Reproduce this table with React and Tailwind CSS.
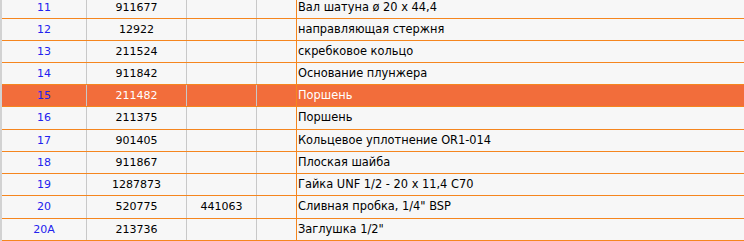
import React from "react";

const rows = [
  { n: "11", code: "911677", alt: "", name: "Вал шатуна ø 20 x 44,4" },
  { n: "12", code: "12922", alt: "", name: "направляющая стержня" },
  { n: "13", code: "211524", alt: "", name: "скребковое кольцо" },
  { n: "14", code: "911842", alt: "", name: "Основание плунжера" },
  { n: "15", code: "211482", alt: "", name: "Поршень", active: true },
  { n: "16", code: "211375", alt: "", name: "Поршень", tall: true },
  { n: "17", code: "901405", alt: "", name: "Кольцевое уплотнение OR1-014" },
  { n: "18", code: "911867", alt: "", name: "Плоская шайба" },
  { n: "19", code: "1287873", alt: "", name: "Гайка UNF 1/2 - 20 x 11,4 C70" },
  { n: "20", code: "520775", alt: "441063", name: "Сливная пробка, 1/4\" BSP", tall: true },
  { n: "20A", code: "213736", alt: "", name: "Заглушка 1/2\"" },
];

export default function App() {
  return (
    <div
      className="w-[744px] h-[241px] overflow-hidden bg-[#f7f7f7] border-l-2 border-[#d2d2d2] text-[11px] text-black"
      style={{ fontFamily: '"DejaVu Sans", Verdana, sans-serif' }}
    >
      <div className="-mt-[3px] flex flex-col">
        {rows.map((r) => (
          <div
            key={r.n}
            className={
              (r.tall ? "h-[23px] " : "h-[22px] ") +
              "flex border-b border-[#f5861f] leading-[21px] " +
              (r.active ? "bg-[#f26d3b] text-white" : "")
            }
          >
            <div className="w-[85px] shrink-0 border-r border-[#c8c8c8] text-center text-[#2222ee]">
              {r.n}
            </div>
            <div className="w-[100px] shrink-0 border-r border-[#c8c8c8] text-center">
              {r.code}
            </div>
            <div className="w-[70px] shrink-0 border-r border-[#c8c8c8] text-center">
              {r.alt}
            </div>
            <div className="w-[40px] shrink-0 border-r border-[#f5861f]" />
            <div className="flex-1 pl-[1px] whitespace-nowrap text-[11.4px]">{r.name}</div>
          </div>
        ))}
      </div>
    </div>
  );
}
